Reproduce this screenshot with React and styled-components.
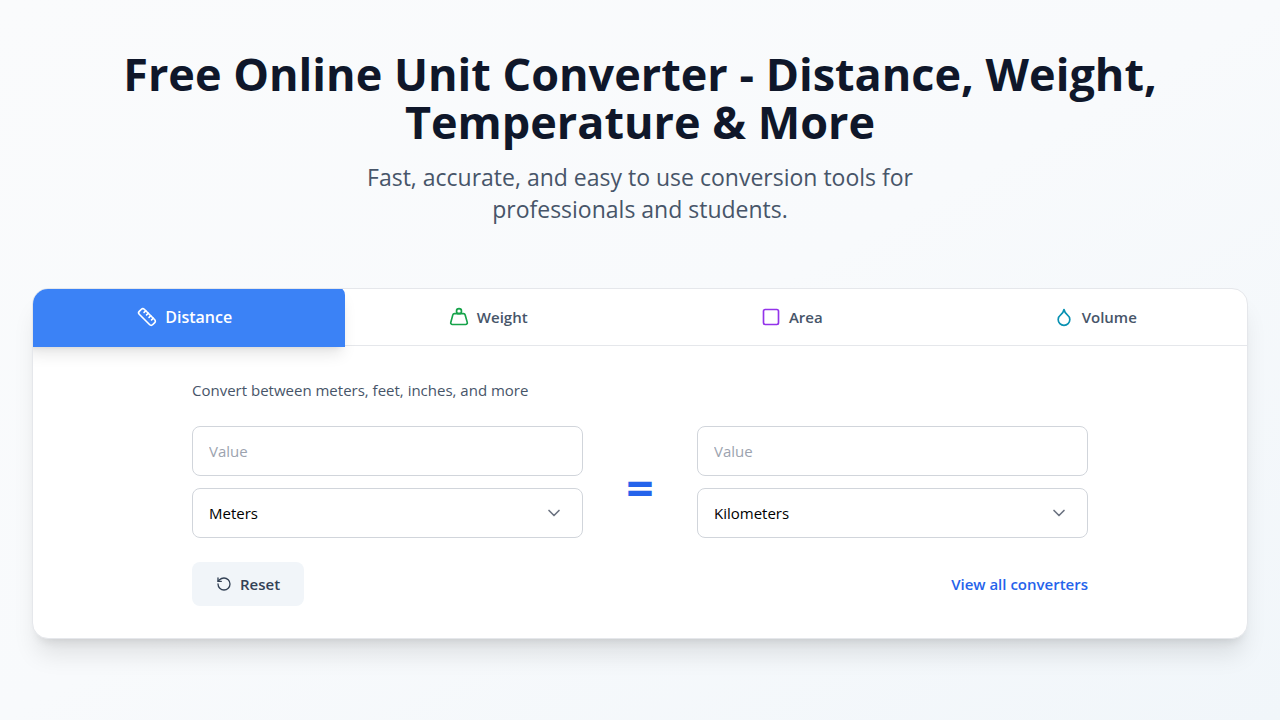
import { useState } from "react";
import styled, { createGlobalStyle, css } from "styled-components";
import { ChevronDown, Droplet, RotateCcw, Ruler, Square, Weight } from "lucide-react";

const GlobalStyle = createGlobalStyle`
  *, *::before, *::after {
    box-sizing: border-box;
  }
  body {
    margin: 0;
    color: #0f172a;
    font-family: "Segoe UI", "Open Sans", sans-serif;
    font-size: 15px;
    line-height: 24px;
  }
  button, input, select {
    font: inherit;
  }
`;

const Page = styled.main`
  min-height: 100vh;
  padding: 50px 32px 80px;
  background: linear-gradient(to bottom right, #fafbfc, #f8fafc 50%, #f1f6fa);
`;

const Header = styled.header`
  max-width: 1152px;
  margin: 0 auto 63px;
  text-align: center;
`;

const Title = styled.h1`
  margin: 0 0 15px;
  font-size: 45px;
  line-height: 48px;
  font-weight: 700;
`;

const Subtitle = styled.p`
  max-width: 576px;
  margin: 0 auto;
  color: #475569;
  font-size: 23px;
  line-height: 32px;
`;

const Card = styled.section`
  max-width: 1216px;
  margin: 0 auto;
  overflow: hidden;
  background: #fff;
  border: 1px solid #e5e7eb;
  border-radius: 16px;
  box-shadow: 0 20px 25px -5px rgba(0, 0, 0, 0.1), 0 8px 10px -6px rgba(0, 0, 0, 0.1);
`;

const Tabs = styled.div`
  display: grid;
  grid-template-columns: repeat(4, 1fr);
  border-bottom: 1px solid #e5e7eb;
`;

const Tab = styled.button`
  position: relative;
  display: flex;
  align-items: center;
  justify-content: center;
  gap: 8px;
  height: 56px;
  padding: 0 16px;
  border: 0;
  background: none;
  color: #475569;
  font-weight: 600;
  cursor: pointer;
  svg {
    color: ${(props) => props.$iconColor};
  }
  ${(props) =>
    props.$active &&
    css`
      z-index: 1;
      color: #fff;
      font-size: 16px;
      svg {
        color: #fff;
      }
      &::before {
        content: "";
        position: absolute;
        inset: -2px -8px;
        z-index: -1;
        background: #3b82f6;
        border-radius: 8px 8px 0 0;
        box-shadow: 0 10px 15px -3px rgba(0, 0, 0, 0.1), 0 4px 6px -4px rgba(0, 0, 0, 0.1);
      }
    `}
`;

const Panel = styled.div`
  max-width: 960px;
  margin: 0 auto;
  padding: 32px;
`;

const Description = styled.p`
  margin: 0 0 24px;
  color: #475569;
`;

const Converter = styled.div`
  display: grid;
  grid-template-columns: 1fr 66px 1fr;
  align-items: center;
  gap: 24px;
`;

const Side = styled.div`
  display: grid;
  gap: 12px;
`;

const field = css`
  width: 100%;
  height: 50px;
  padding: 0 16px;
  background: #fff;
  border: 1px solid #d1d5db;
  border-radius: 8px;
`;

const ValueInput = styled.input`
  ${field}
  color: #0f172a;
  &::placeholder {
    color: #9ca3af;
  }
`;

const SelectWrapper = styled.div`
  position: relative;
  svg {
    position: absolute;
    top: 15px;
    right: 19px;
    color: #6b7280;
    pointer-events: none;
  }
`;

const UnitSelect = styled.select`
  ${field}
  appearance: none;
  color: #000;
`;

const Equals = styled.span`
  padding-top: 12px;
  color: #2563eb;
  font-size: 48px;
  line-height: 48px;
  font-weight: 700;
  text-align: center;
`;

const Footer = styled.div`
  display: flex;
  align-items: center;
  justify-content: space-between;
  margin-top: 24px;
`;

const ResetButton = styled.button`
  display: flex;
  align-items: center;
  gap: 8px;
  height: 44px;
  padding: 0 24px;
  background: #f1f5f9;
  border: 0;
  border-radius: 8px;
  color: #334155;
  font-weight: 600;
  cursor: pointer;
`;

const AllLink = styled.a`
  color: #2563eb;
  font-weight: 600;
  text-decoration: none;
`;

const categories = [
  {
    name: "Distance",
    icon: Ruler,
    color: "#2563eb",
    description: "Convert between meters, feet, inches, and more",
    units: { Meters: 1, Kilometers: 1000, Feet: 0.3048, Inches: 0.0254 },
  },
  {
    name: "Weight",
    icon: Weight,
    color: "#16a34a",
    description: "Convert between kilograms, pounds, ounces, and more",
    units: { Kilograms: 1, Pounds: 0.45359237, Ounces: 0.028349523 },
  },
  {
    name: "Area",
    icon: Square,
    color: "#9333ea",
    description: "Convert between square meters, acres, hectares, and more",
    units: { "Square meters": 1, Acres: 4046.8564, Hectares: 10000 },
  },
  {
    name: "Volume",
    icon: Droplet,
    color: "#0891b2",
    description: "Convert between liters, gallons, cups, and more",
    units: { Liters: 1, Gallons: 3.7854118, Cups: 0.23658824 },
  },
];

function UnitField({ label, value, unit, units, onValue, onUnit }) {
  return (
    <Side>
      <ValueInput
        type="number"
        placeholder="Value"
        aria-label={`${label} value`}
        value={value}
        onChange={(e) => onValue(e.target.value)}
      />
      <SelectWrapper>
        <UnitSelect
          aria-label={`${label} unit`}
          value={unit}
          onChange={(e) => onUnit(e.target.value)}
        >
          {units.map((name) => (
            <option key={name}>{name}</option>
          ))}
        </UnitSelect>
        <ChevronDown size={20} aria-hidden="true" />
      </SelectWrapper>
    </Side>
  );
}

export default function App() {
  const [category, setCategory] = useState(categories[0]);
  const [value, setValue] = useState("");
  const [from, setFrom] = useState("Meters");
  const [to, setTo] = useState("Kilometers");

  const units = Object.keys(category.units);
  const ratio = category.units[from] / category.units[to];
  const result = value === "" ? "" : String(Number((value * ratio).toPrecision(10)));

  const selectCategory = (next) => {
    const names = Object.keys(next.units);
    setCategory(next);
    setFrom(names[0]);
    setTo(names[1]);
    setValue("");
  };

  return (
    <>
      <GlobalStyle />
      <Page>
        <Header>
          <Title>Free Online Unit Converter - Distance, Weight, Temperature &amp; More</Title>
          <Subtitle>
            Fast, accurate, and easy to use conversion tools for professionals and students.
          </Subtitle>
        </Header>
        <Card>
          <Tabs role="tablist">
            {categories.map((item) => (
              <Tab
                key={item.name}
                role="tab"
                aria-selected={item === category}
                $active={item === category}
                $iconColor={item.color}
                onClick={() => selectCategory(item)}
              >
                <item.icon size={20} aria-hidden="true" />
                {item.name}
              </Tab>
            ))}
          </Tabs>
          <Panel>
            <Description>{category.description}</Description>
            <Converter>
              <UnitField
                label="From"
                value={value}
                unit={from}
                units={units}
                onValue={setValue}
                onUnit={setFrom}
              />
              <Equals>=</Equals>
              <UnitField
                label="To"
                value={result}
                unit={to}
                units={units}
                onValue={(next) => setValue(next === "" ? "" : String(next / ratio))}
                onUnit={setTo}
              />
            </Converter>
            <Footer>
              <ResetButton onClick={() => selectCategory(category)}>
                <RotateCcw size={16} aria-hidden="true" />
                Reset
              </ResetButton>
              <AllLink href="#converters">View all converters</AllLink>
            </Footer>
          </Panel>
        </Card>
      </Page>
    </>
  );
}
